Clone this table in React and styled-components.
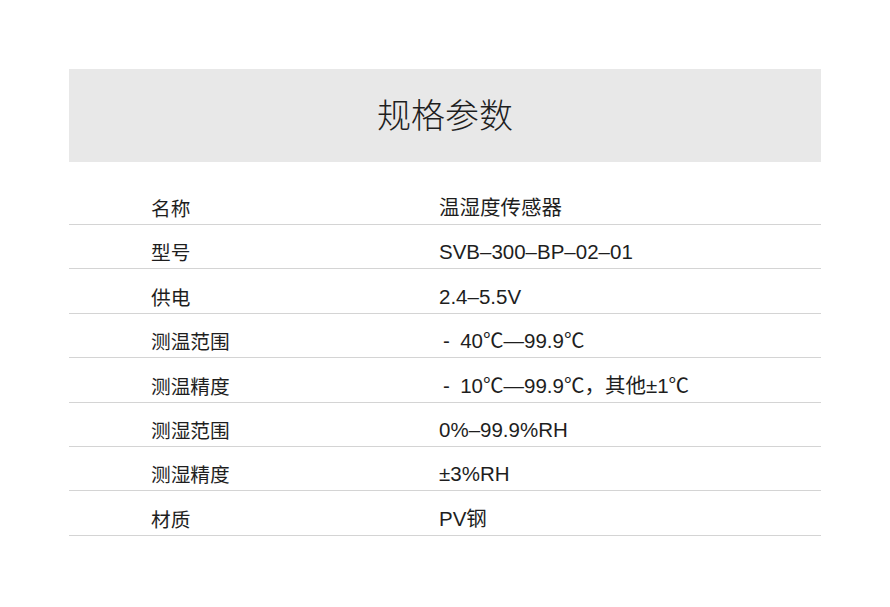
import styled, { createGlobalStyle } from 'styled-components'

const GlobalStyle = createGlobalStyle`
  html, body {
    margin: 0;
    padding: 0;
    background: #fff;
  }
  body {
    font-family: "Liberation Sans", "Noto Sans CJK SC", sans-serif;
    color: #222;
  }
`

const Page = styled.div`
  width: 890px;
  height: 607px;
  box-sizing: border-box;
  padding: 69px 69px 0;
`

const Header = styled.div`
  height: 93px;
  background: #e8e8e8;
  display: flex;
  align-items: center;
  justify-content: center;
`

const Title = styled.h1`
  margin: 0 0 5px;
  font-family: "Noto Sans CJK SC", sans-serif;
  font-size: 34px;
  font-weight: 300;
  color: #1e1e1e;
`

const Table = styled.div`
  margin-top: 18.5px;
`

const Row = styled.div`
  height: 44.43px;
  box-sizing: border-box;
  display: flex;
  align-items: flex-end;
  padding-bottom: 4px;
  border-bottom: 1px solid #d4d4d4;
  line-height: 24px;
`

const Label = styled.div`
  width: 288px;
  padding-left: 82px;
  font-family: "Noto Sans CJK SC", sans-serif;
  font-size: 19.7px;
  color: #1e1e1e;
`

const Value = styled.div`
  flex: 1;
  font-size: 20.5px;
  color: #1e1e1e;
  white-space: pre;
`

const specs = [
  ['名称', '温湿度传感器'],
  ['型号', 'SVB–300–BP–02–01'],
  ['供电', '2.4–5.5V'],
  ['测温范围', '\u2009-\u200240℃—99.9℃'],
  ['测温精度', '\u2009-\u200210℃—99.9℃，其他±1℃'],
  ['测湿范围', '0%–99.9%RH'],
  ['测湿精度', '±3%RH'],
  ['材质', 'PV钢'],
]

export default function App() {
  return (
    <>
      <GlobalStyle />
      <Page>
        <Header>
          <Title>规格参数</Title>
        </Header>
        <Table>
          {specs.map(([k, v]) => (
            <Row key={k}>
              <Label>{k}</Label>
              <Value>{v}</Value>
            </Row>
          ))}
        </Table>
      </Page>
    </>
  )
}
